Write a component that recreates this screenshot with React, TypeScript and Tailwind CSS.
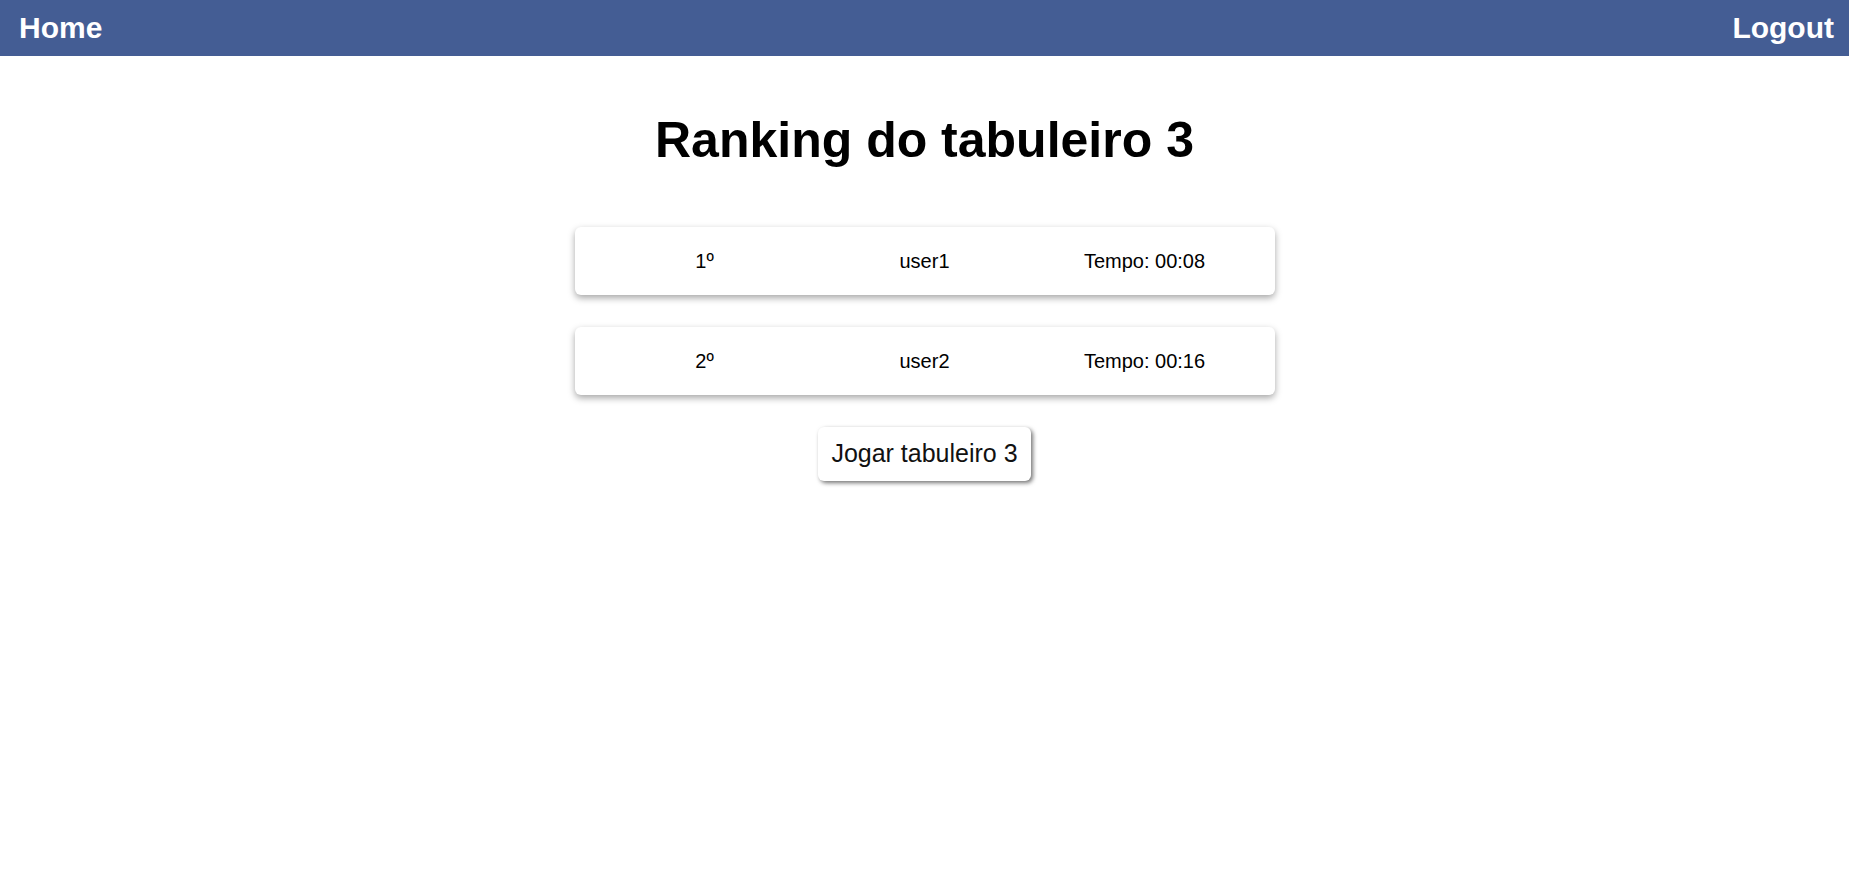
import React from "react";

const rows = [
  { pos: "1º", user: "user1", time: "Tempo: 00:08" },
  { pos: "2º", user: "user2", time: "Tempo: 00:16" },
];

export default function App() {
  return (
    <div className="min-h-screen bg-white text-black" style={{ fontFamily: '"Liberation Sans", Arial, sans-serif' }}>
      <header className="h-[56px] bg-[#445d94] flex items-center justify-between pl-[19px] pr-[15px]">
        <span className="text-white font-bold text-[30px] leading-none">Home</span>
        <span className="text-white font-bold text-[30px] leading-none">Logout</span>
      </header>
      <main className="flex flex-col items-center">
        <h1 className="mt-[55px] mb-[58px] text-[50px] font-bold leading-[58px]">Ranking do tabuleiro 3</h1>
        {rows.map((r) => (
          <div
            key={r.pos}
            className="w-[700px] h-[68px] mb-8 px-5 flex items-center rounded-md bg-white shadow-[0_3px_7px_rgba(0,0,0,0.35)]"
          >
            <div className="flex-1 text-center text-[20px]">{r.pos}</div>
            <div className="flex-1 text-center text-[20px]">{r.user}</div>
            <div className="flex-1 text-center text-[20px]">{r.time}</div>
          </div>
        ))}
        <button className="h-[54px] px-[13px] rounded-md bg-white text-[25px] text-[#111] shadow-[2px_2px_4px_rgba(0,0,0,0.55)]">
          Jogar tabuleiro 3
        </button>
      </main>
    </div>
  );
}
